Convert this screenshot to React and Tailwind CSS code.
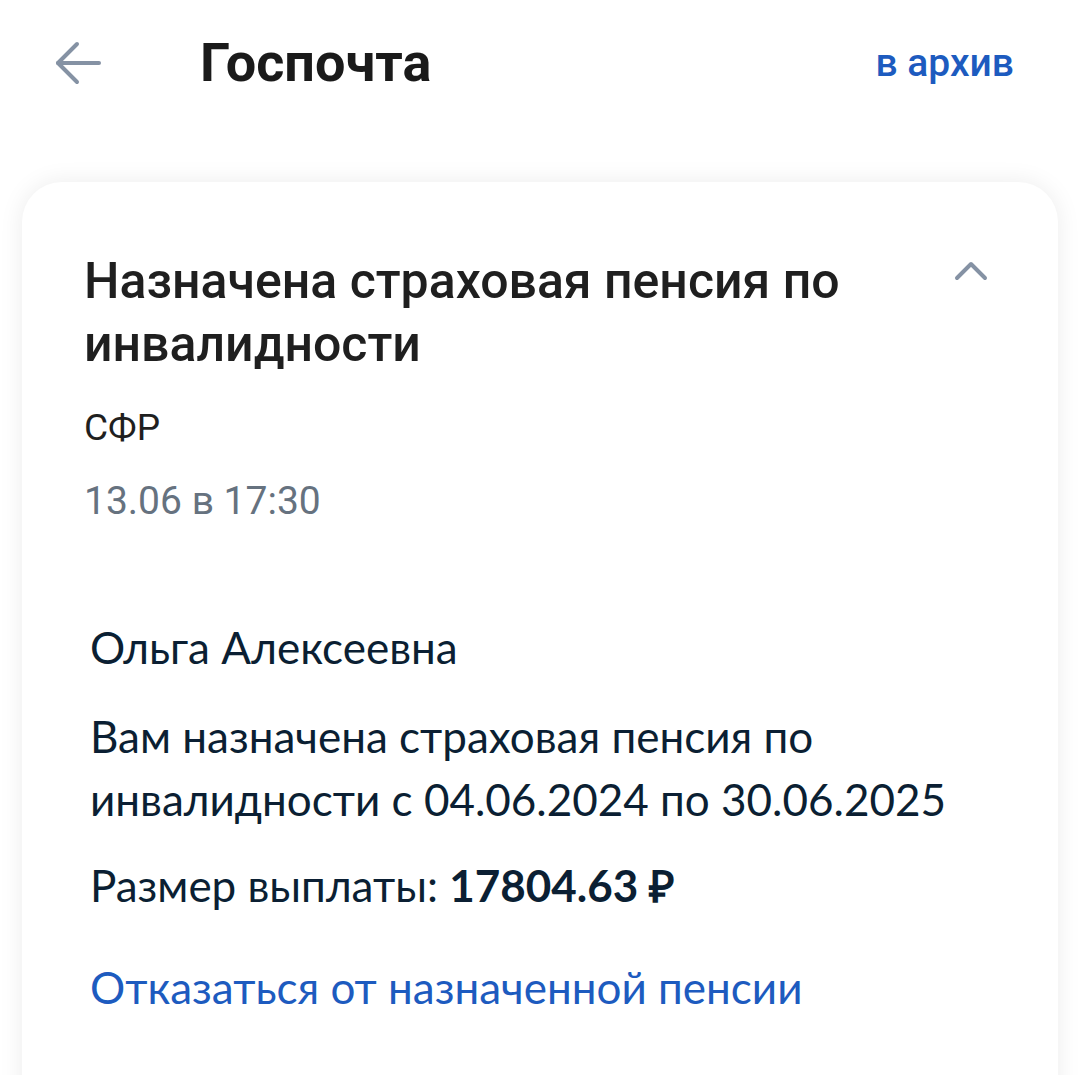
export default function App() {
  return (
    <div className="w-[1080px] h-[1075px] overflow-hidden bg-white" style={{ fontFamily: "Roboto, sans-serif" }}>
      <div className="h-[126px] flex items-center relative">
        <div className="pl-[55px] w-[200px] flex items-center">
          <svg width="46" height="44" viewBox="0 0 46 44" fill="none" stroke="#8592a4" strokeWidth="4" strokeLinecap="round" strokeLinejoin="round">
            <path d="M44 22H3" />
            <path d="M22 3L3 22l19 19" />
          </svg>
        </div>
        <div className="text-[54px] font-bold text-[#1a1a1a] leading-none">Госпочта</div>
        <div className="ml-auto pr-[66px] text-[39px] font-medium text-[#1d5bbf] leading-none">в архив</div>
      </div>
      <div className="mx-[22px] mt-[56px] bg-white rounded-[40px] shadow-[0_0_24px_rgba(0,0,0,0.08)] h-[1000px] pl-[62px] pr-[70px] pt-[68px]">
        <div className="flex items-start">
          <div className="flex-1 text-[50px] font-medium text-[#1f1f1f] leading-[63px]">
            Назначена страховая пенсия по инвалидности
          </div>
          <svg className="mt-[9px] ml-[40px]" width="34" height="22" viewBox="0 0 34 22" fill="none" stroke="#8592a4" strokeWidth="4" strokeLinecap="round" strokeLinejoin="round">
            <path d="M3 19L17 5l14 14" />
          </svg>
        </div>
        <div className="mt-[32px] text-[37px] text-[#1f1f1f] leading-[40px]">СФР</div>
        <div className="mt-[33px] text-[39px] text-[#66727f] leading-[40px]">13.06 в 17:30</div>
        <div className="pl-[6px] mt-[95px] text-[44px] text-[#0b1f33] leading-[63px]" style={{ fontFamily: "Lato, sans-serif" }}>
          <div>Ольга Алексеевна</div>
          <div className="mt-[26px]">Вам назначена страховая пенсия по инвалидности с 04.06.2024 по 30.06.2025</div>
          <div className="mt-[23px]">
            Размер выплаты: <span className="font-bold">17804.63 ₽</span>
          </div>
          <div className="mt-[39px] text-[#1d5bbf]">Отказаться от назначенной пенсии</div>
        </div>
      </div>
    </div>
  );
}
